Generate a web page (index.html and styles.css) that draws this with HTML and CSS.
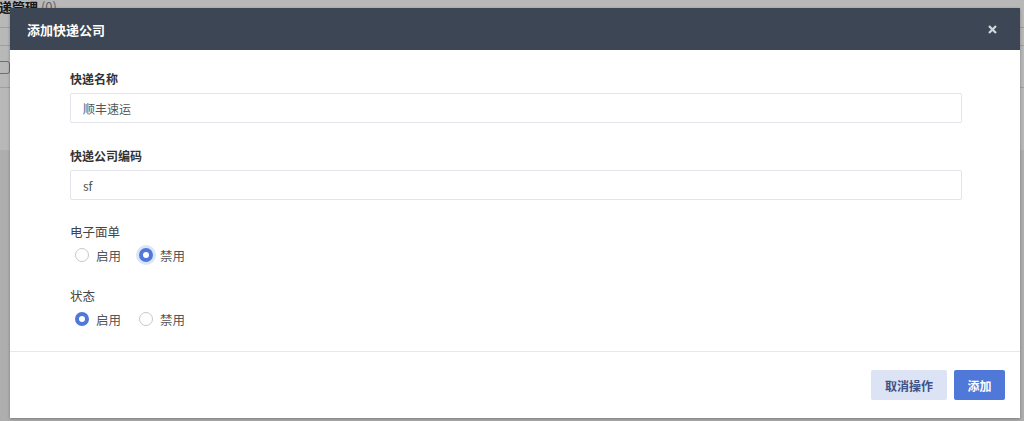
FILE: index.html
```html
<!DOCTYPE html>
<html>
<head>
<meta charset="utf-8">
<link rel="stylesheet" href="styles.css">
</head>
<body>
<div class="page">
  <div class="page-title">快递管理 <span class="count">(0)</span></div>
  <div class="page-row"></div>
  <div class="page-tool"><span class="page-input"></span></div>
  <div class="page-row2"></div>
  <div class="page-bottom"></div>
</div>
<div class="overlay">
  <div class="modal">
    <div class="modal-header">
      <span class="modal-title">添加快递公司</span>
      <svg class="close" width="9" height="9" viewBox="0 0 9 9"><path d="M1 1 L8 8 M8 1 L1 8" stroke="#d3d7dc" stroke-width="2.2" stroke-linecap="butt"/></svg>
    </div>
    <div class="modal-body">
      <div class="field">
        <div class="label bold">快递名称</div>
        <div class="input">顺丰速运</div>
      </div>
      <div class="field">
        <div class="label bold">快递公司编码</div>
        <div class="input">sf</div>
      </div>
      <div class="field small">
        <div class="label">电子面单</div>
        <div class="radios">
          <span class="radio"><span class="dot"></span>启用</span>
          <span class="radio checked"><span class="dot focus"></span>禁用</span>
        </div>
      </div>
      <div class="field small">
        <div class="label">状态</div>
        <div class="radios">
          <span class="radio checked"><span class="dot"></span>启用</span>
          <span class="radio"><span class="dot"></span>禁用</span>
        </div>
      </div>
    </div>
    <div class="modal-footer">
      <button class="btn btn-cancel">取消操作</button>
      <button class="btn btn-primary">添加</button>
    </div>
  </div>
</div>
</body>
</html>
```

FILE: styles.css
```css
* { box-sizing: border-box; }
html, body { margin: 0; padding: 0; }
body {
  width: 1024px;
  height: 421px;
  overflow: hidden;
  font-family: "Noto Sans CJK SC", "Noto Sans", sans-serif;
  background: #ffffff;
  position: relative;
}
.page { width: 1024px; height: 421px; display: flex; flex-direction: column; }
.page-title {
  height: 28px;
  margin-left: -14px;
  font-size: 13px;
  font-weight: bold;
  color: #222;
  line-height: 14px;
  border-bottom: 1px solid #ddd;
}
.page-title .count { font-weight: normal; color: #888; }
.page-row { height: 18px; border-bottom: 1px solid #ddd; }
.page-tool { height: 42px; border-bottom: 1px solid #ddd; position: relative; }
.page-input {
  position: absolute; left: -20px; top: 15px;
  width: 30px; height: 13px; border: 1px solid #999; border-radius: 3px;
}
.page-row2 { height: 62px; }
.page-bottom { flex: 1; background: #f2f2f2; }
.overlay {
  position: absolute; inset: 0;
  background: rgba(0, 0, 0, 0.28);
  padding: 8px 4px 3px 10px;
}
.modal {
  width: 1010px;
  height: 410px;
  background: #fff;
  display: flex;
  flex-direction: column;
  box-shadow: 0 1px 3px rgba(0,0,0,0.3);
}
.modal-header {
  height: 42px;
  flex: none;
  background: #3c4654;
  display: flex;
  align-items: center;
  justify-content: space-between;
  padding: 0 23px 0 17px;
}
.modal-title { color: #fff; font-size: 13px; font-weight: bold; }
.close { display: block; }
.modal-body {
  flex: 1;
  min-height: 0;
  overflow: hidden;
  padding: 20px 58px 0 60px;
  border-bottom: 1px solid #e6e9ec;
}
.field { margin-bottom: 24px; }
.field.small { margin-bottom: 23px; }
.label { font-size: 12px; color: #333; line-height: 18px; margin-bottom: 5px; }
.label.bold { font-weight: bold; }
.field.small .label { margin-bottom: 5px; color: #444; font-size: 12.5px; }
.input {
  height: 30px;
  border: 1px solid #e1e4e8;
  border-radius: 2px;
  padding: 0 12px;
  font-size: 12px;
  color: #555;
  display: flex;
  align-items: center;
}
.field:nth-child(2) { margin-bottom: 23px; }
.radios { display: flex; gap: 18px; padding-left: 5px; height: 18px; align-items: center; }
.radio { display: flex; align-items: center; font-size: 12.5px; color: #555; gap: 7px; }
.dot {
  width: 14px; height: 14px; border-radius: 50%;
  border: 1px solid #c5c9ce; background: #fff;
  display: inline-block;
}
.radio.checked .dot {
  border: 4px solid #4f78d8;
  background: #fff;
}
.radio.checked .dot.focus { box-shadow: 0 0 0 3px rgba(79,120,216,0.2); }
.modal-footer {
  height: 66px;
  flex: none;
  display: flex;
  justify-content: flex-end;
  align-items: center;
  gap: 7px;
  padding: 0 15px 0 0;
}
.btn {
  height: 30px;
  border: none;
  border-radius: 2px;
  font-family: inherit;
  font-size: 12px;
  font-weight: bold;
  padding: 0 12px;
}
.btn-cancel { background: #dce3f5; color: #3f5187; width: 76px; }
.btn-primary { background: #4f78d8; color: #fff; width: 51px; }
```
